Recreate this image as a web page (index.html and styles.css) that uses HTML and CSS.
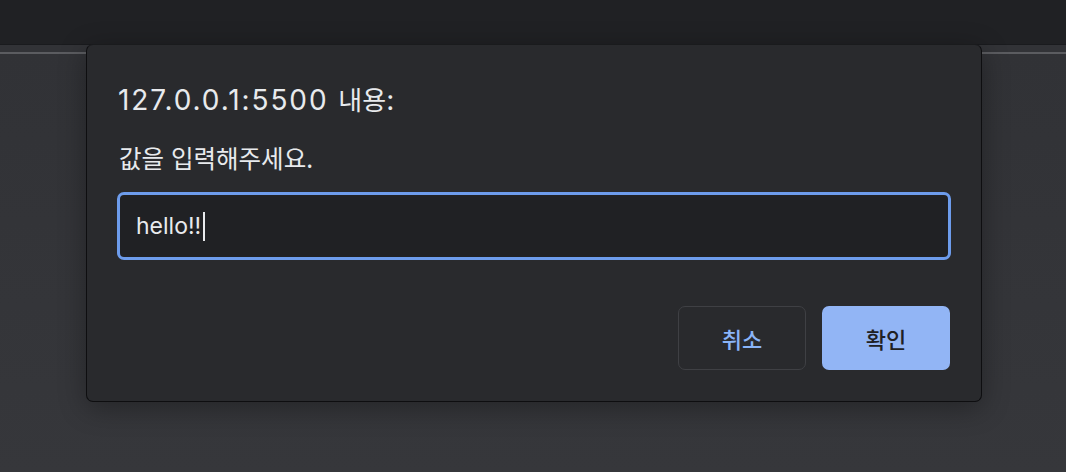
FILE: index.html
```html
<!DOCTYPE html>
<html lang="ko">
<head>
<meta charset="utf-8">
<title>prompt</title>
<link rel="stylesheet" href="styles.css">
</head>
<body>
<div class="topbar"></div>
<div class="toolbar"></div>
<div class="page"></div>
<div class="dialog" role="dialog">
  <div class="title">127.0.0.1:5500 <span class="ko">내용</span>:</div>
  <div class="message">값을 입력해주세요.</div>
  <div class="field"><span class="value">hello!!</span><span class="caret"></span></div>
  <div class="actions">
    <button class="btn btn-cancel">취소</button>
    <button class="btn btn-ok">확인</button>
  </div>
</div>
</body>
</html>
```
FILE: styles.css
```css
html, body {
  margin: 0;
  padding: 0;
}
body {
  width: 1066px;
  height: 472px;
  overflow: hidden;
  background: #35363a;
  font-family: Inter, "Noto Sans CJK KR", sans-serif;
  position: relative;
}
.topbar {
  height: 44px;
  background: #202124;
  border-bottom: 1px solid #1a1b1e;
}
.toolbar {
  height: 7px;
  background: #323337;
  border-bottom: 2px solid #5b5c60;
}
.page {
  height: 418px;
  background: linear-gradient(#313236, #36373b);
}
.dialog {
  position: absolute;
  left: 86px;
  top: 44px;
  width: 896px;
  height: 358px;
  box-sizing: border-box;
  background: #292a2d;
  border: 1px solid #0e0e10;
  border-top-color: #1a1b1d;
  border-radius: 7px;
  box-shadow: 0 6px 28px rgba(0, 0, 0, 0.32);
  padding: 38px 30px 0 30px;
  display: flex;
  flex-direction: column;
  color: #e8eaed;
}
.title {
  font-size: 28px;
  letter-spacing: 1.9px;
  line-height: 32px;
  height: 32px;
  white-space: nowrap;
  padding-left: 1px;
}
.title .ko {
  font-family: "Noto Sans CJK KR", sans-serif;
  font-size: 26px;
  letter-spacing: 0;
}
.message {
  margin-top: 28px;
  font-family: "Noto Sans CJK KR", sans-serif;
  font-size: 24.5px;
  line-height: 30px;
  height: 30px;
  padding-left: 2px;
}
.field {
  margin-top: 19px;
  height: 68px;
  box-sizing: border-box;
  border: 3px solid #6d9cec;
  border-radius: 7px;
  background: #202124;
  display: flex;
  align-items: center;
  padding-left: 16px;
}
.value {
  font-size: 23px;
  color: #e8eaed;
}
.caret {
  width: 2px;
  height: 29px;
  background: #e8eaed;
  margin-left: 2px;
}
.actions {
  margin-top: 46px;
  display: flex;
  justify-content: flex-end;
  gap: 16px;
  padding-right: 1px;
}
.btn {
  width: 128px;
  height: 64px;
  box-sizing: border-box;
  border-radius: 7px;
  font-family: "Noto Sans CJK KR", sans-serif;
  font-size: 22px;
  font-weight: 500;
  padding: 0;
  cursor: pointer;
}
.btn-cancel {
  background: transparent;
  border: 1px solid #3f4044;
  color: #8ab4f8;
}
.btn-ok {
  background: #92b5f5;
  border: none;
  color: #202124;
}
```
